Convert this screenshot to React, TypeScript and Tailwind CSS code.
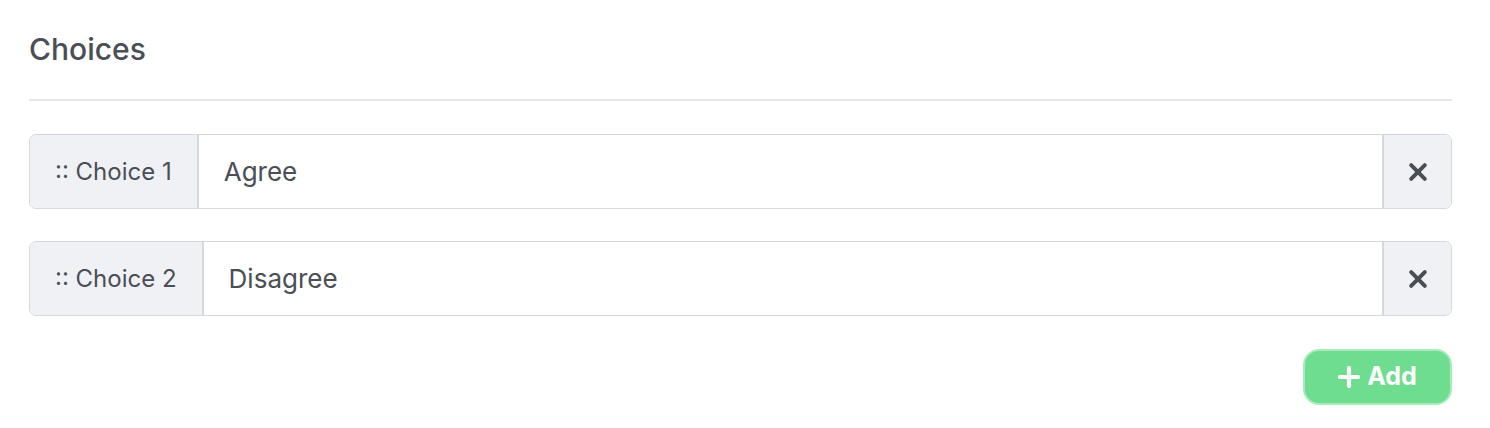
import React from "react";

function XIcon() {
  return (
    <svg width="20" height="20" viewBox="0 0 20 20" fill="none">
      <path d="M3.2 3.2L16.8 16.8M16.8 3.2L3.2 16.8" stroke="#4a4e55" strokeWidth="4" strokeLinecap="round" />
    </svg>
  );
}

function PlusIcon() {
  return (
    <svg width="22" height="22" viewBox="0 0 22 22" fill="none">
      <path d="M11 2V20M2 11H20" stroke="#ffffff" strokeWidth="4.2" strokeLinecap="round" />
    </svg>
  );
}

function Row({ label, value }: { label: string; value: string }) {
  return (
    <div className="flex h-[75px] border border-[#d4d7dc] rounded-[7px] overflow-hidden">
      <div className="flex items-center bg-[#f0f1f5] px-[25px] border-r-2 border-[#d4d7dc] text-[24px] text-[#4a4e55]">
        :: {label}
      </div>
      <div className="flex-1 flex items-center pl-[25px] text-[26px] text-[#4a4e55] bg-white">{value}</div>
      <div className="w-[69px] flex items-center justify-center bg-[#f0f1f5] border-l-2 border-[#d4d7dc]">
        <XIcon />
      </div>
    </div>
  );
}

export default function App() {
  return (
    <div className="bg-white w-[1490px] h-[428px] font-['Inter',sans-serif]">
      <div className="pl-[29px] pr-[38px] pt-[31px] flex flex-col">
        <h2 className="text-[30px] leading-[36px] font-medium text-[#4a4e55]">Choices</h2>
        <div className="h-[2px] bg-[#e6e7e9] mt-[32px]" />
        <div className="mt-[33px]">
          <Row label="Choice 1" value="Agree" />
        </div>
        <div className="mt-[32px]">
          <Row label="Choice 2" value="Disagree" />
        </div>
        <div className="mt-[33px] flex justify-end">
          <button className="w-[149px] h-[56px] rounded-[16px] bg-[#6fdd8f] border-2 border-[#a9ecbc] flex items-center justify-center gap-[7px] text-white font-bold text-[25px]">
            <PlusIcon />
            <span>Add</span>
          </button>
        </div>
      </div>
    </div>
  );
}
